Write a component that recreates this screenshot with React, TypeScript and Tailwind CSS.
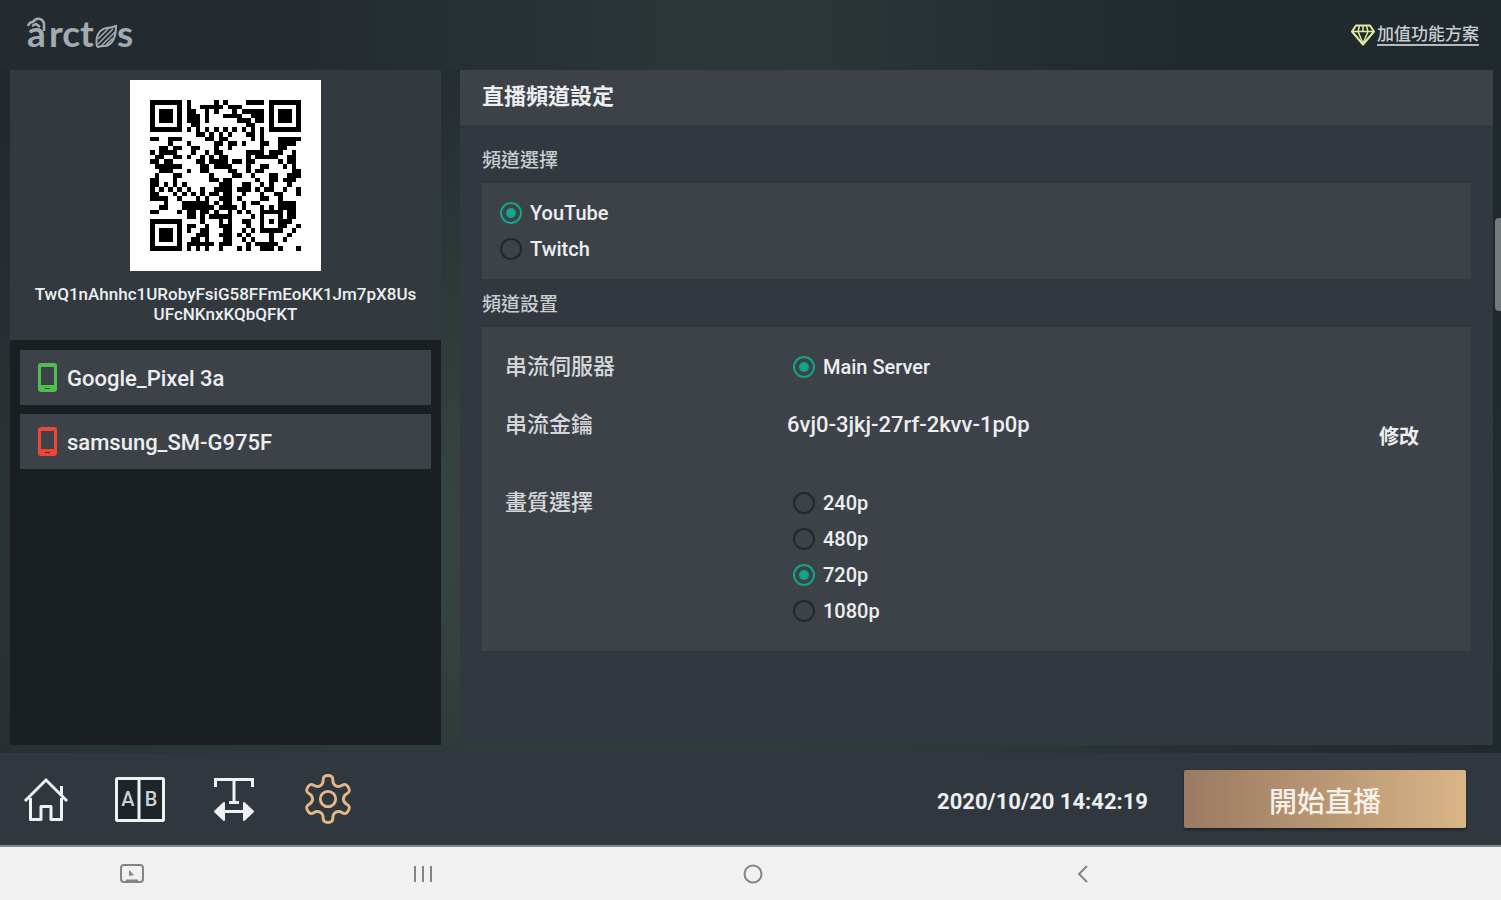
import { useState, type ReactNode } from "react";

const QR_ROWS = [
  "#######.#.....#.#....####.#######",
  "#.....#.#..#####.###......#.....#",
  "#.###.#.##..#.#...#.#####.#.###.#",
  "#.###.#.###.#...####..###.#.###.#",
  "#.###.#.###.#......###.##.#.###.#",
  "#.....#..##..........##...#.....#",
  "#######.#.#.#.#.#.#.#.#.#.#######",
  "..........##.#.#.#...##.#........",
  "##..###.....##.##.....#.#...#####",
  "....#...#.....##.##.#...##..####.",
  "..##.##..##...#..#......#...##...",
  "#.####...#..#.##.....####.###..#.",
  ".##..##.#..#.#.##....#.#####..##.",
  "##.##.....##.####.##.##.....#.##.",
  ".######....##.####...#..##...#.#.",
  "..###...#..##....##..#.##......##",
  ".#...##......#....##..#...##..###",
  "##...#.......##.##.....#..##.###.",
  "##.#.#.#.......###..##..#.#...#..",
  "#.#.#.#.#..#..####.###.#.##..#..#",
  "##...#.#.#.#.##.##..#...#..##...#",
  "####..#...#.#..###.#....##..#....",
  "...#...######.#.##..#.##....####.",
  "..##...#######.####.#...#.#.####.",
  "##....#.##.##.#..#.#.#..#####.##.",
  "........##.#.#####....#.#...#.##.",
  "#######....#...#.#..##..#.#.###..",
  "#.....#.##..#..###...#..#...##..#",
  "#.###.#.#..##...##..#.#.#####..#.",
  "#.###.#...###..###.#.#....#...#..",
  "#.###.#..##.#...##..#.#...#..#...",
  "#.....#.######.###...#.#####.....",
  "#######.#.#.#..#...#.#..###.#...#",
];

const DEVICES = [
  { name: "Google_Pixel 3a", color: "text-[#4fbf50]" },
  { name: "samsung_SM-G975F", color: "text-[#ee4537]" },
];

const QUALITIES = ["240p", "480p", "720p", "1080p"];

function Logo() {
  return (
    <svg width="110" height="54" viewBox="0 0 110 54" role="img" aria-label="arctos" className="text-[#a3abb1]">
      <g fill="currentColor" fontFamily="Lato, sans-serif" fontWeight="700" fontSize="37">
        <text x="0" y="39">a</text>
        <text x="22" y="39">rct</text>
        <text x="90" y="39">s</text>
      </g>
      <g fill="none" stroke="currentColor" strokeWidth="2.500">
        <path d="M1 18c1-3 3-4 5-4 3-5 9-4 11 1v8" />
        <path d="M5 18l4-2 4 3" />
        <path d="M70 38c-2-9 2-17 10-18 3 0 6-1 9-2 0 10-3 20-12 20-3 0-4 0-6 1z" strokeWidth="2" />
        <path d="M71 31l10-10M71 36l15-15M74 38l14-14M79 37l7-7" strokeWidth="1.500" />
      </g>
    </svg>
  );
}

function DiamondIcon() {
  return (
    <svg width="24" height="22" viewBox="0 0 24 22" fill="none" stroke="#e3ea9e" strokeWidth="2" strokeLinejoin="round">
      <path d="M5 1.500h14l4 6L12 20.500 1 7.500z" />
      <path d="M1 7.500h22M8.500 2l-1.500 5.500 5 12 5-12L15.500 2M12 2v5" strokeWidth="1.500" />
    </svg>
  );
}

function QrCode() {
  return (
    <svg width="151" height="151" viewBox="0 0 33 33" shapeRendering="crispEdges" role="img" aria-label="QR code">
      {QR_ROWS.map((row, y) =>
        row.split("").map((cell, x) => (cell === "#" ? <rect key={`${x}-${y}`} x={x} y={y} width="1" height="1" /> : null)),
      )}
    </svg>
  );
}

function PhoneIcon({ className }: { className: string }) {
  return (
    <svg width="19" height="29" viewBox="0 0 19 29" className={className}>
      <path
        fill="currentColor"
        fillRule="evenodd"
        d="M3 0h13a3 3 0 0 1 3 3v23a3 3 0 0 1-3 3H3a3 3 0 0 1-3-3V3a3 3 0 0 1 3-3zM3 4v18h13V4z"
      />
      <path d="M7 25.500h5" stroke="#2b4437" strokeWidth="1" />
    </svg>
  );
}

function HomeIcon() {
  return (
    <svg width="48" height="48" viewBox="0 0 48 48" fill="none" stroke="currentColor" strokeWidth="3">
      <path d="M3 26L24 5l21 21" />
      <path d="M8.500 23v21.500H19V31.500h10v13h10.500V23" strokeLinejoin="round" />
      <path d="M39.500 21V11" />
    </svg>
  );
}

function CompareIcon() {
  return (
    <svg width="50" height="48" viewBox="0 0 50 48" fill="none" stroke="currentColor" strokeWidth="3" className="shrink-0">
      <rect x="1.500" y="3.500" width="47" height="42" rx="1" fill="#1d242a" />
      <path d="M24 4v41" />
      <g fill="#cdd1d4" stroke="none" fontFamily="Roboto, sans-serif" fontSize="20" fontWeight="500" textAnchor="middle">
        <text x="13" y="31">A</text>
        <text x="36" y="31">B</text>
      </g>
    </svg>
  );
}

function TextWidthIcon() {
  return (
    <svg width="48" height="48" viewBox="0 0 48 48" fill="none" stroke="currentColor" strokeWidth="3">
      <path d="M5.500 12V4.500h37V12M24 5v22M19 27.500h10" />
      <path d="M8 36.500h32" />
      <path d="M14 28v17L5 36.500zM34 28v17l9-8.500z" strokeWidth="2" strokeLinejoin="round" fill="currentColor" />
    </svg>
  );
}

// Six rounded teeth: corner points joined by curves through their midpoints
function gearPath(cx: number, cy: number) {
  const points: number[][] = [];
  for (let tooth = 0; tooth < 6; tooth++) {
    for (const [radius, offset] of [[16.5, -17], [25, -12], [25, 12], [16.5, 17]]) {
      const angle = ((tooth * 60 - 90 + offset) * Math.PI) / 180;
      points.push([cx + radius * Math.cos(angle), cy + radius * Math.sin(angle)]);
    }
  }
  const middle = (a: number[], b: number[]) => `${(a[0] + b[0]) / 2} ${(a[1] + b[1]) / 2}`;
  const curves = points.map((point, i) => `Q${point[0]} ${point[1]} ${middle(point, points[(i + 1) % points.length])}`);
  return `M${middle(points[points.length - 1], points[0])}${curves.join("")}z`;
}

function GearIcon() {
  return (
    <svg width="48" height="50" viewBox="0 0 50 52" fill="none" stroke="currentColor" strokeWidth="3" className="shrink-0">
      <path d={gearPath(25, 26)} />
      <circle cx="25" cy="26" r="8" />
    </svg>
  );
}

interface RadioProps {
  name: string;
  label: string;
  checked: boolean;
  onSelect: () => void;
}

function Radio({ name, label, checked, onSelect }: RadioProps) {
  return (
    <label className="flex h-9 w-fit cursor-pointer items-center gap-2 text-[20px] leading-6 font-medium">
      <input
        type="radio"
        name={name}
        checked={checked}
        onChange={onSelect}
        className="size-[22px] appearance-none rounded-full border-2 border-[#1f282e] bg-clip-content p-1 checked:border-[#0fa588] checked:bg-[#0fa588]"
      />
      {label}
    </label>
  );
}

function SectionTitle({ children }: { children: ReactNode }) {
  return <h2 className="mt-3 mb-2 text-[19px] leading-7 font-medium text-[#c9cdd0]">{children}</h2>;
}

export default function App() {
  const [channel, setChannel] = useState("YouTube");
  const [server, setServer] = useState("Main Server");
  const [quality, setQuality] = useState("720p");

  return (
    <div className="relative flex min-h-screen flex-col bg-[#232b30] bg-[radial-gradient(ellipse_at_42%_60%,#3a4a46_0%,#2c3738_40%,#20292e_75%)] font-[Roboto,'Noto_Sans_CJK_TC',sans-serif] text-[#eceeef]">
      <header className="flex h-[70px] items-center justify-between bg-linear-to-r from-[#232b31] from-20% via-[#2c3838] via-50% to-[#20292e] to-80% pr-[22px] pl-[27px]">
        <Logo />
        <a href="#plans" className="flex items-center gap-0.5 text-[#c9cdd0]">
          <DiamondIcon />
          <span className="border-b-2 border-[#b4b9bc] text-[17px] leading-5 font-medium">加值功能方案</span>
        </a>
      </header>

      <div className="flex flex-1 gap-[19px] pr-2 pb-2 pl-2.5">
        <aside className="flex w-[431px] shrink-0 flex-col bg-[#1a1f21]">
          <div className="flex flex-col items-center bg-[#32393f] px-5 pt-2.5 pb-4">
            <div className="bg-white p-5">
              <QrCode />
            </div>
            <p className="mt-[13px] text-center text-[17px] leading-5 font-medium break-all">
              TwQ1nAhnhc1URobyFsiG58FFmEoKK1Jm7pX8UsUFcNKnxKQbQFKT
            </p>
          </div>
          <ul className="flex flex-col gap-[9px] px-2.5 pt-2.5">
            {DEVICES.map((device) => (
              <li key={device.name} className="flex h-[55px] items-center gap-2.5 bg-[#3d4249] pl-[18px] text-[22px] font-medium">
                <PhoneIcon className={device.color} />
                <span className="pt-0.5">{device.name}</span>
              </li>
            ))}
          </ul>
        </aside>

        <main className="min-w-0 flex-1 bg-[#31383f]">
          <h1 className="h-[55px] bg-[#3d4249] px-[22px] text-[22px] leading-[54px] font-bold">直播頻道設定</h1>
          <div className="px-[22px] pt-2.5 pb-6">
            <SectionTitle>頻道選擇</SectionTitle>
            <div className="bg-[#3d4249] py-3 pl-[18px]">
              {["YouTube", "Twitch"].map((name) => (
                <Radio key={name} name="channel" label={name} checked={channel === name} onSelect={() => setChannel(name)} />
              ))}
            </div>

            <SectionTitle>頻道設置</SectionTitle>
            <div className="grid grid-cols-[282px_1fr_auto] items-start bg-[#3d4249] py-[22px] pr-6 pl-[23px] text-[22px] leading-9">
              <h3 className="font-medium text-[#d5d8da]">串流伺服器</h3>
              <div className="col-span-2 mb-[22px] pl-1.5">
                <Radio
                  name="server"
                  label="Main Server"
                  checked={server === "Main Server"}
                  onSelect={() => setServer("Main Server")}
                />
              </div>

              <h3 className="font-medium text-[#d5d8da]">串流金鑰</h3>
              <p className="font-medium">6vj0-3jkj-27rf-2kvv-1p0p</p>
              <button type="button" className="mt-1 mb-[26px] h-12 w-24 pt-1 text-[20px] font-bold">
                修改
              </button>

              <h3 className="font-medium text-[#d5d8da]">畫質選擇</h3>
              <div className="col-span-2 pl-1.5">
                {QUALITIES.map((item) => (
                  <Radio key={item} name="quality" label={item} checked={quality === item} onSelect={() => setQuality(item)} />
                ))}
              </div>
            </div>
          </div>
        </main>
      </div>

      <div className="absolute top-[218px] right-0 h-[93px] w-1.5 rounded-l bg-[#737b7d]" />

      <footer className="flex h-[92px] items-center justify-between bg-[#30373e] pr-[35px] pl-[22px]">
        <nav className="flex items-center gap-[46px] text-[#eff1f2]">
          <button type="button" aria-label="Home" className="flex size-12 items-center justify-center">
            <HomeIcon />
          </button>
          <button type="button" aria-label="Compare" className="flex size-12 items-center justify-center">
            <CompareIcon />
          </button>
          <button type="button" aria-label="Text" className="flex size-12 items-center justify-center">
            <TextWidthIcon />
          </button>
          <button type="button" aria-label="Settings" className="flex size-12 items-center justify-center text-[#e2b888]">
            <GearIcon />
          </button>
        </nav>
        <div className="flex items-center gap-9">
          <time className="pt-1 text-[22px] font-bold">2020/10/20 14:42:19</time>
          <button
            type="button"
            className="h-[58px] w-[282px] rounded-xs bg-linear-to-r from-[#9a7a62] to-[#d9b587] pt-2 text-[28px] font-medium text-[#f8f1e9] shadow-[0_2px_3px_#1c242b]"
          >
            開始直播
          </button>
        </div>
      </footer>

      <nav className="grid h-[55px] grid-cols-[264fr_318fr_342fr_318fr_259fr] items-center justify-items-center border-t-2 border-[#85888a] bg-[#f1f1f1] text-[#858585]">
        <button type="button" aria-label="Screen">
          <svg width="24" height="20" viewBox="0 0 24 20" fill="none" stroke="currentColor" strokeWidth="2">
            <rect x="1" y="1" width="22" height="17" rx="3" />
            <path d="M9 6v6l5-1z" fill="currentColor" stroke="none" />
            <path d="M6 16.500h12" />
          </svg>
        </button>
        <button type="button" aria-label="Recents">
          <svg width="18" height="18" viewBox="0 0 18 18" stroke="currentColor" strokeWidth="2">
            <path d="M1 1v16M9 1v16M17 1v16" />
          </svg>
        </button>
        <button type="button" aria-label="Home screen">
          <svg width="20" height="20" viewBox="0 0 20 20" fill="none" stroke="currentColor" strokeWidth="2">
            <circle cx="10" cy="10" r="8.500" />
          </svg>
        </button>
        <button type="button" aria-label="Back">
          <svg width="12" height="18" viewBox="0 0 12 18" fill="none" stroke="currentColor" strokeWidth="2">
            <path d="M10 1L2 9l8 8" />
          </svg>
        </button>
      </nav>
    </div>
  );
}
